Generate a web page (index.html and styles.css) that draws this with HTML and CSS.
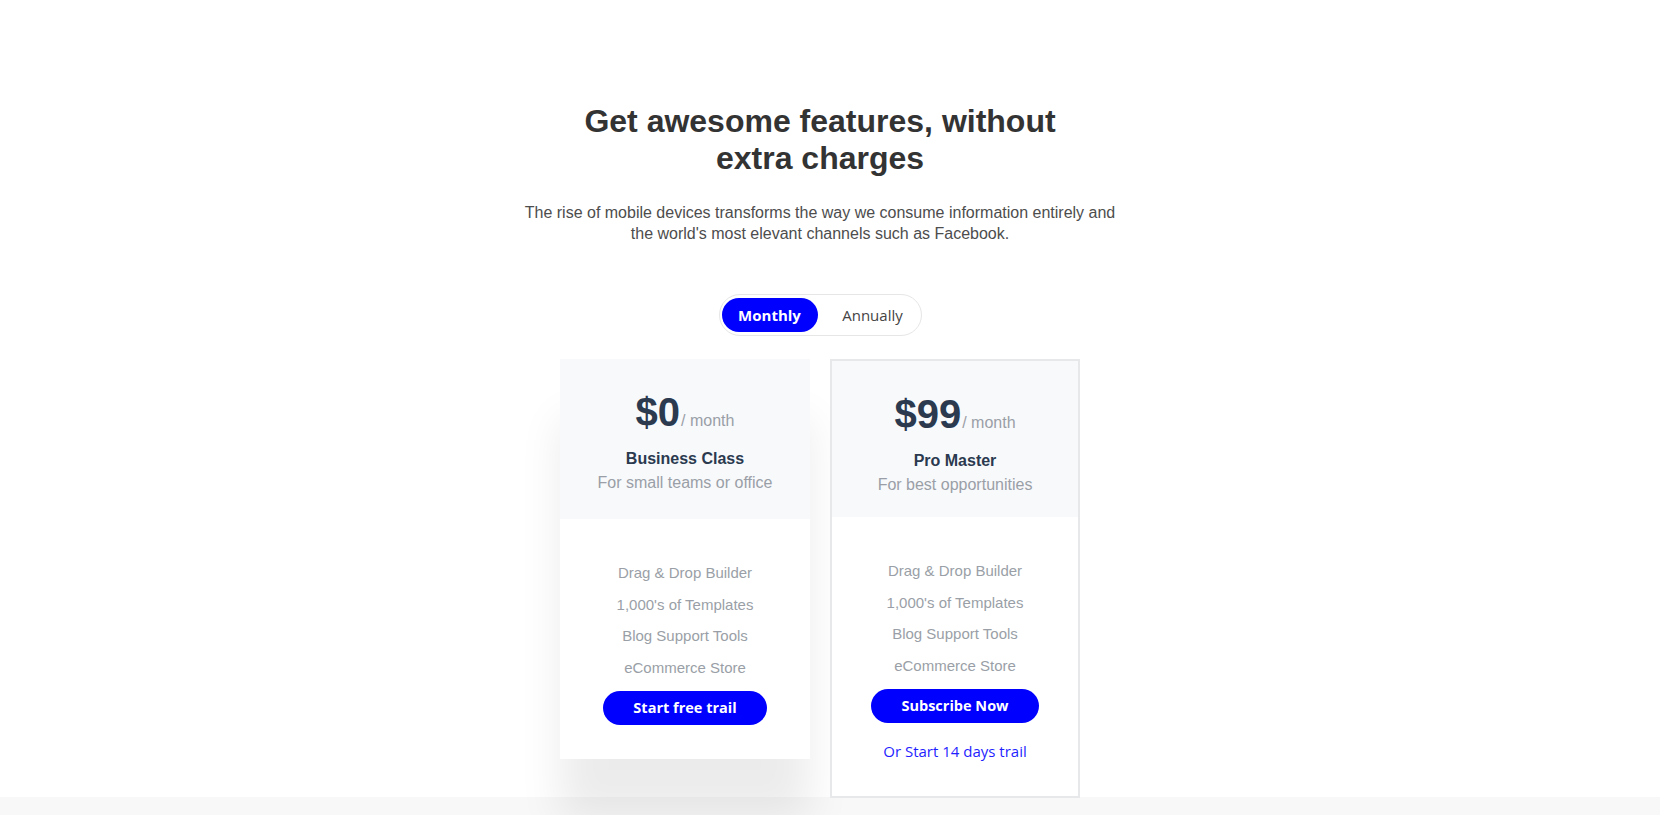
FILE: index.html
```html
<!DOCTYPE html>
<html lang="en">
<head>
<meta charset="utf-8">
<title>Pricing</title>
<link rel="stylesheet" href="styles.css">
</head>
<body>
<section class="pricing">
  <div class="pricing-inner">
    <h2 class="title">Get awesome features, without extra charges</h2>
    <p class="lead">The rise of mobile devices transforms the way we consume information entirely and the world's most elevant channels such as Facebook.</p>
    <div class="toggle">
      <button class="toggle-item active">Monthly</button>
      <button class="toggle-item annual">Annually</button>
    </div>
    <div class="cards">
      <div class="card card-basic">
        <div class="card-head">
          <div class="price"><span class="amount">$0</span><span class="per">/ month</span></div>
          <div class="plan">Business Class</div>
          <div class="plan-sub">For small teams or office</div>
        </div>
        <div class="card-body">
          <ul class="features">
            <li>Drag &amp; Drop Builder</li>
            <li>1,000's of Templates</li>
            <li>Blog Support Tools</li>
            <li>eCommerce Store</li>
          </ul>
          <a class="btn" href="#">Start free trail</a>
        </div>
      </div>
      <div class="card card-pro">
        <div class="card-head">
          <div class="price"><span class="amount">$99</span><span class="per">/ month</span></div>
          <div class="plan">Pro Master</div>
          <div class="plan-sub">For best opportunities</div>
        </div>
        <div class="card-body">
          <ul class="features">
            <li>Drag &amp; Drop Builder</li>
            <li>1,000's of Templates</li>
            <li>Blog Support Tools</li>
            <li>eCommerce Store</li>
          </ul>
          <a class="btn" href="#">Subscribe Now</a>
          <a class="trial-link" href="#">Or Start 14 days trail</a>
        </div>
      </div>
    </div>
  </div>
</section>
<section class="next-section"></section>
</body>
</html>
```

FILE: styles.css
```css
* { box-sizing: border-box; }

html, body {
  margin: 0;
  padding: 0;
  background: #ffffff;
  font-family: "Liberation Sans", Arial, sans-serif;
}

body { overflow: hidden; }

.pricing {
  padding: 103px 20px 0 0;
}

.pricing-inner {
  display: flex;
  flex-direction: column;
  align-items: center;
  text-align: center;
}

.title {
  margin: 0;
  max-width: 500px;
  font-size: 32px;
  line-height: 37px;
  font-weight: 700;
  color: #333333;
}

.lead {
  margin: 25.3px 0 0;
  max-width: 600px;
  font-size: 16px;
  line-height: 21px;
  color: #4d4d4d;
}

.toggle {
  margin-top: 49.7px;
  display: flex;
  align-items: center;
  padding: 3px 2px;
  border: 1px solid #e6e6e6;
  border-radius: 21px;
  background: #ffffff;
}

.toggle-item {
  height: 34px;
  border: 0;
  border-radius: 17px;
  background: transparent;
  font-family: "Open Sans", "Noto Sans", sans-serif;
  font-size: 15px;
  color: #444444;
  padding: 0;
  cursor: pointer;
}

.toggle-item.active {
  width: 96px;
  background: #0000ff;
  color: #ffffff;
  font-weight: 700;
}

.toggle-item.annual {
  width: 101px;
  padding-left: 9px;
}

.cards {
  margin-top: 23px;
  margin-bottom: -1px;
  display: flex;
  align-items: flex-start;
  gap: 20px;
}

.card {
  position: relative;
  z-index: 1;
  width: 250px;
  background: #ffffff;
}

.card-basic {
  box-shadow: 0 60px 40px rgba(0, 0, 0, 0.08);
}

.card-pro {
  border: 2px solid #e6e8ea;
}

.card-head {
  background: #f8f9fb;
  padding: 33.5px 10px 23.5px;
}

.card-pro .card-head {
  padding-bottom: 19.5px;
}

.price {
  height: 40px;
  line-height: 40px;
  color: #2b3a4f;
}

.amount {
  font-size: 40px;
  font-weight: 700;
}

.per {
  font-size: 16px;
  color: #9a9fa7;
  margin-left: 1px;
}

.plan {
  margin-top: 15px;
  font-size: 16px;
  line-height: 24px;
  font-weight: 700;
  color: #2b3a4f;
}

.plan-sub {
  font-size: 16px;
  line-height: 24px;
  color: #9a9fa7;
}

.card-body {
  display: flex;
  flex-direction: column;
  align-items: center;
  padding: 38px 10px 34px;
}

.card-pro .card-body {
  padding-bottom: 35px;
}

.features {
  list-style: none;
  margin: 0;
  padding: 0;
}

.features li {
  font-size: 15px;
  line-height: 31.67px;
  color: #9a9fa7;
}

.btn {
  margin-top: 7px;
  display: inline-flex;
  align-items: center;
  justify-content: center;
  height: 34px;
  padding: 0 30px;
  border-radius: 17px;
  background: #0000ff;
  color: #ffffff;
  font-family: "Open Sans", "Noto Sans", sans-serif;
  font-size: 14.5px;
  font-weight: 700;
  text-decoration: none;
}

.trial-link {
  margin-top: 18px;
  font-family: "Open Sans", "Noto Sans", sans-serif;
  font-size: 15px;
  line-height: 20px;
  color: #1f1fff;
  text-decoration: none;
}

.next-section {
  height: 60px;
  background: #f8f8f8;
}
```
